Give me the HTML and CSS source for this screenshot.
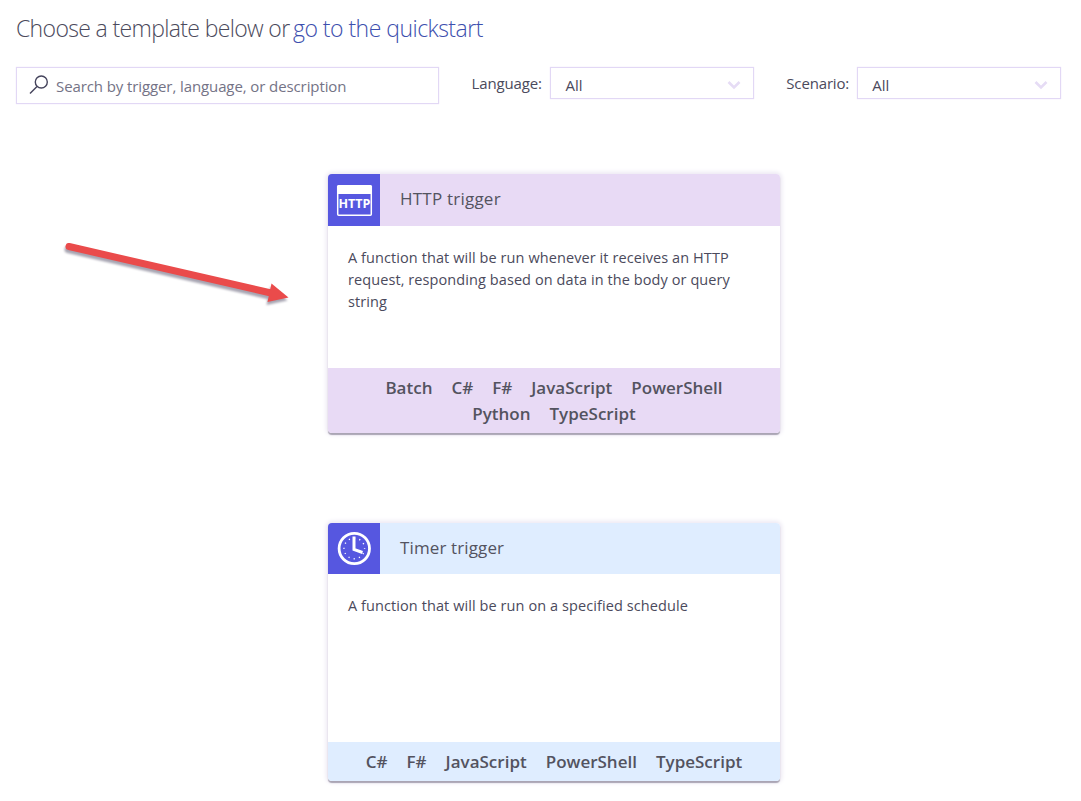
FILE: index.html
```html
<!DOCTYPE html>
<html lang="en">
<head>
<meta charset="utf-8">
<title>Choose a template</title>
<link rel="stylesheet" href="styles.css">
</head>
<body>
<main class="page">
  <h1 class="title"><span class="title-lead">Choose a template below or</span> <a class="title-link">go to the quickstart</a></h1>
  <div class="filters">
    <div class="search">
      <svg class="search-icon" width="20" height="20" viewBox="0 0 20 20"><circle cx="12.300" cy="7" r="6"/><path d="M8 11.400L1 18.600"/></svg>
      <span class="search-text">Search by trigger, language, or description</span>
    </div>
    <span class="label label-language">Language:</span>
    <div class="select"><span>All</span><svg class="chevron" width="14" height="10" viewBox="0 0 14 10"><path d="M1.500 2L7 7.500L12.500 2"/></svg></div>
    <span class="label label-scenario">Scenario:</span>
    <div class="select"><span>All</span><svg class="chevron" width="14" height="10" viewBox="0 0 14 10"><path d="M1.500 2L7 7.500L12.500 2"/></svg></div>
  </div>
  <div class="cards">
    <section class="card card-http">
      <header class="card-head">
        <div class="card-icon">
          <svg width="52" height="52" viewBox="0 0 52 52"><rect x="9.700" y="12" width="33.600" height="29.200" rx="1" fill="none" stroke="#fff" stroke-width="1.500"/><rect x="9" y="11" width="35" height="9" rx="1.500" fill="#fff"/><text class="icon-text" x="26.500" y="34" text-anchor="middle" textLength="32" lengthAdjust="spacingAndGlyphs">HTTP</text></svg>
        </div>
        <h2 class="card-title http-title">HTTP trigger</h2>
      </header>
      <p class="card-body"><span class="line">A function that will be run whenever it receives an HTTP</span><span class="line">request, responding based on data in the body or query</span><span class="line">string</span></p>
      <footer class="card-foot">
        <div class="tags"><span>Batch</span><span>C#</span><span>F#</span><span>JavaScript</span><span>PowerShell</span></div>
        <div class="tags"><span>Python</span><span>TypeScript</span></div>
      </footer>
    </section>
    <section class="card card-timer">
      <header class="card-head">
        <div class="card-icon">
          <svg width="52" height="51" viewBox="0 0 52 51" fill="none" stroke="#fff"><circle cx="26.300" cy="25.500" r="15.200" stroke-width="2.800"/><path d="M26 13.500V26.500L34.500 29.500" stroke-width="3"/><circle cx="26.300" cy="25.500" r="10.300" stroke-width="1.400" stroke-dasharray="1.200 4.193" stroke-dashoffset="0.600"/></svg>
        </div>
        <h2 class="card-title timer-title">Timer trigger</h2>
      </header>
      <p class="card-body"><span class="line">A function that will be run on a specified schedule</span></p>
      <footer class="card-foot">
        <div class="tags"><span>C#</span><span>F#</span><span>JavaScript</span><span>PowerShell</span><span>TypeScript</span></div>
      </footer>
    </section>
  </div>
</main>
<svg class="arrow" width="240" height="80" viewBox="0 0 240 80"><path d="M9 10.500L211 57" stroke="#ea4b4b" stroke-width="7" stroke-linecap="round"/><path d="M211.500 47.500L228.500 61.500L207.500 66Z" fill="#ea4b4b"/></svg>
</body>
</html>
```
FILE: styles.css
```css
* { box-sizing: border-box; }
body {
  margin: 0;
  background: #fff;
  color: #4b4a5c;
  font-family: "Open Sans", "Noto Sans", sans-serif;
}
.page { width: 1081px; height: 801px; padding: 14px 20px 0 16px; overflow: hidden; }
.title {
  display: flex;
  gap: 5px;
  margin: 0;
  height: 30px;
  font-size: 23px;
  font-weight: 300;
  line-height: 29px;
  white-space: nowrap;
}
.title-lead { width: 272px; letter-spacing: -0.65px; }
.title-link { color: #3d4fae; letter-spacing: -0.52px; }
.filters { display: flex; align-items: flex-start; margin-top: 23px; height: 38px; white-space: nowrap; }
.search {
  display: flex;
  align-items: center;
  width: 423px;
  height: 37px;
  padding: 1px 0 0 12px;
  border: 1px solid #e2d8f5;
  box-shadow: 0 0 1px #e6dcf8;
}
.search-icon { fill: none; stroke: #45445c; stroke-width: 1.400; margin-top: -2px; }
.search-text { margin-left: 7px; font-size: 15px; color: #747386; letter-spacing: -0.1px; }
.label { font-size: 15px; line-height: 32px; letter-spacing: -0.15px; }
.label-language { width: 112px; padding-left: 33px; }
.label-scenario { width: 103px; padding-left: 32px; }
.select {
  display: flex;
  align-items: center;
  justify-content: space-between;
  width: 204px;
  height: 32px;
  padding: 3px 12px 0 14px;
  border: 1px solid #e2d8f5;
  box-shadow: 0 0 1px #e6dcf8;
  font-size: 15px;
}
.chevron { fill: none; stroke: #e6dcf5; stroke-width: 2.6; }
.cards { display: flex; flex-direction: column; gap: 90px; width: 452px; margin: 69px 0 0 312px; }
.card {
  display: flex;
  flex-direction: column;
  height: 259px;
  border-radius: 4px;
  overflow: hidden;
  box-shadow: 0 2px 1px #aaa5b4, 0 0 4px 2px #ece8f3;
}
.card-http { --tint: #e8daf5; }
.card-timer { --tint: #dfedff; height: 258px; }
.card-head { display: flex; height: 51px; background: var(--tint); }
.card-http .card-head { height: 52px; }
.card-icon { width: 52px; background: #5657e0; }
.card-icon svg { display: block; }
.icon-text { font-family: "Open Sans", sans-serif; font-size: 12px; font-weight: 700; fill: #fff; }
.card-title { margin: 0 0 0 20px; font-size: 17px; font-weight: 400; line-height: 50px; color: #53535f; }
.http-title { letter-spacing: 0.22px; }
.timer-title { letter-spacing: 0.12px; }
.card-body { flex: 1; margin: 0; padding: 21px 19px 0 20px; font-size: 14.5px; line-height: 22px; letter-spacing: 0.085px; white-space: nowrap; }
.line { display: block; }
.card-foot { padding: 7px 0 6px; background: var(--tint); color: #53535f; }
.tags { display: flex; justify-content: center; gap: 19px; height: 26px; font-size: 17px; font-weight: 600; line-height: 26px; }
.arrow { position: absolute; left: 60px; top: 236px; fill: none; filter: drop-shadow(-1px 3px 1px #a7a5b2); }
```
